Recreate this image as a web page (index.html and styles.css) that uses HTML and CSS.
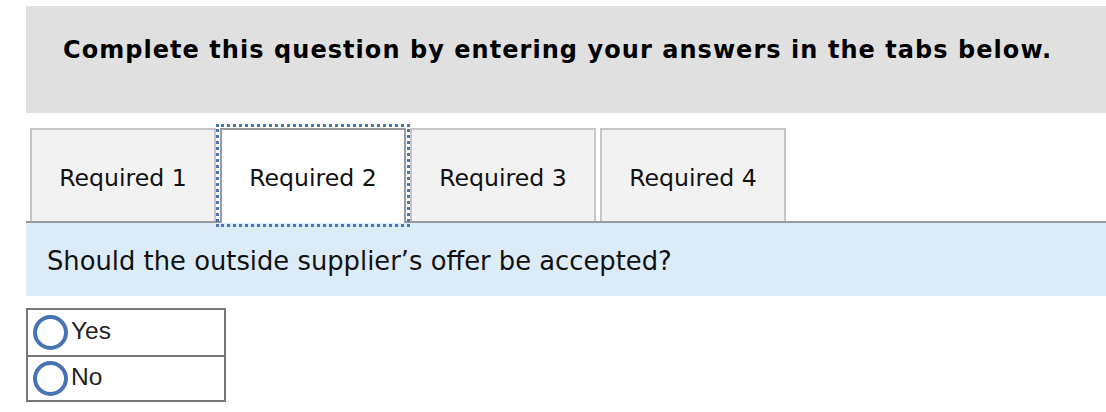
FILE: index.html
```html
<!DOCTYPE html>
<html lang="en">
<head>
<meta charset="utf-8">
<title>Question</title>
<link rel="stylesheet" href="styles.css">
</head>
<body>
<div class="page">
  <div class="banner">Complete this question by entering your answers in the tabs below.</div>
  <div class="tabs">
    <div class="tab">Required 1</div>
    <div class="tab tab-active">Required 2</div>
    <div class="tab">Required 3</div>
    <div class="tab">Required 4</div>
  </div>
  <div class="question">Should the outside supplier’s offer be accepted?</div>
  <div class="choices">
    <label class="choice"><span class="radio"></span><span class="choice-text">Yes</span></label>
    <label class="choice"><span class="radio"></span><span class="choice-text">No</span></label>
  </div>
</div>
</body>
</html>
```

FILE: styles.css
```css
* { box-sizing: border-box; }
html, body { margin: 0; padding: 0; background: #fff; }
body {
  font-family: "DejaVu Sans", Verdana, sans-serif;
  color: #000;
  width: 1106px;
  overflow: hidden;
}
.page {
  padding: 6px 0 0 26px;
}
.banner {
  height: 107px;
  background: #e0e0e0;
  padding: 30px 0 0 37px;
  font-weight: bold;
  font-size: 24px;
  letter-spacing: 1.05px;
  white-space: nowrap;
}
.tabs {
  display: flex;
  gap: 4px;
  margin-top: 15px;
  padding-left: 4px;
  border-bottom: 2px solid #999;
  height: 95px;
}
.tab {
  width: 186px;
  height: 93px;
  background: #f2f2f2;
  border: 2px solid #c6c6c6;
  border-bottom: none;
  padding-top: 34px;
  text-align: center;
  font-size: 23.6px;
  color: #111;
  white-space: nowrap;
}
.tab-active {
  background: #fff;
  border-color: #999;
  height: 95px;
  margin-bottom: -2px;
  outline: 3px dotted #4774b6;
  outline-offset: 1px;
  position: relative;
}
.question {
  height: 73px;
  background: #dcebf8;
  padding: 23px 0 0 21px;
  font-size: 25.8px;
  color: #111;
  white-space: nowrap;
}
.choices {
  width: 200px;
  margin-top: 12px;
  border: 2px solid #777;
}
.choice {
  display: flex;
  align-items: center;
  height: 45px;
  padding-left: 5px;
}
.choice + .choice {
  border-top: 2px solid #777;
}
.radio {
  width: 35px;
  height: 35px;
  border: 4px solid #4773b5;
  border-radius: 50%;
  flex: none;
}
.choice-text {
  margin-left: 3px;
  margin-bottom: 4px;
  font-family: "Liberation Sans", Arial, sans-serif;
  font-size: 24.5px;
  color: #222;
}
```
